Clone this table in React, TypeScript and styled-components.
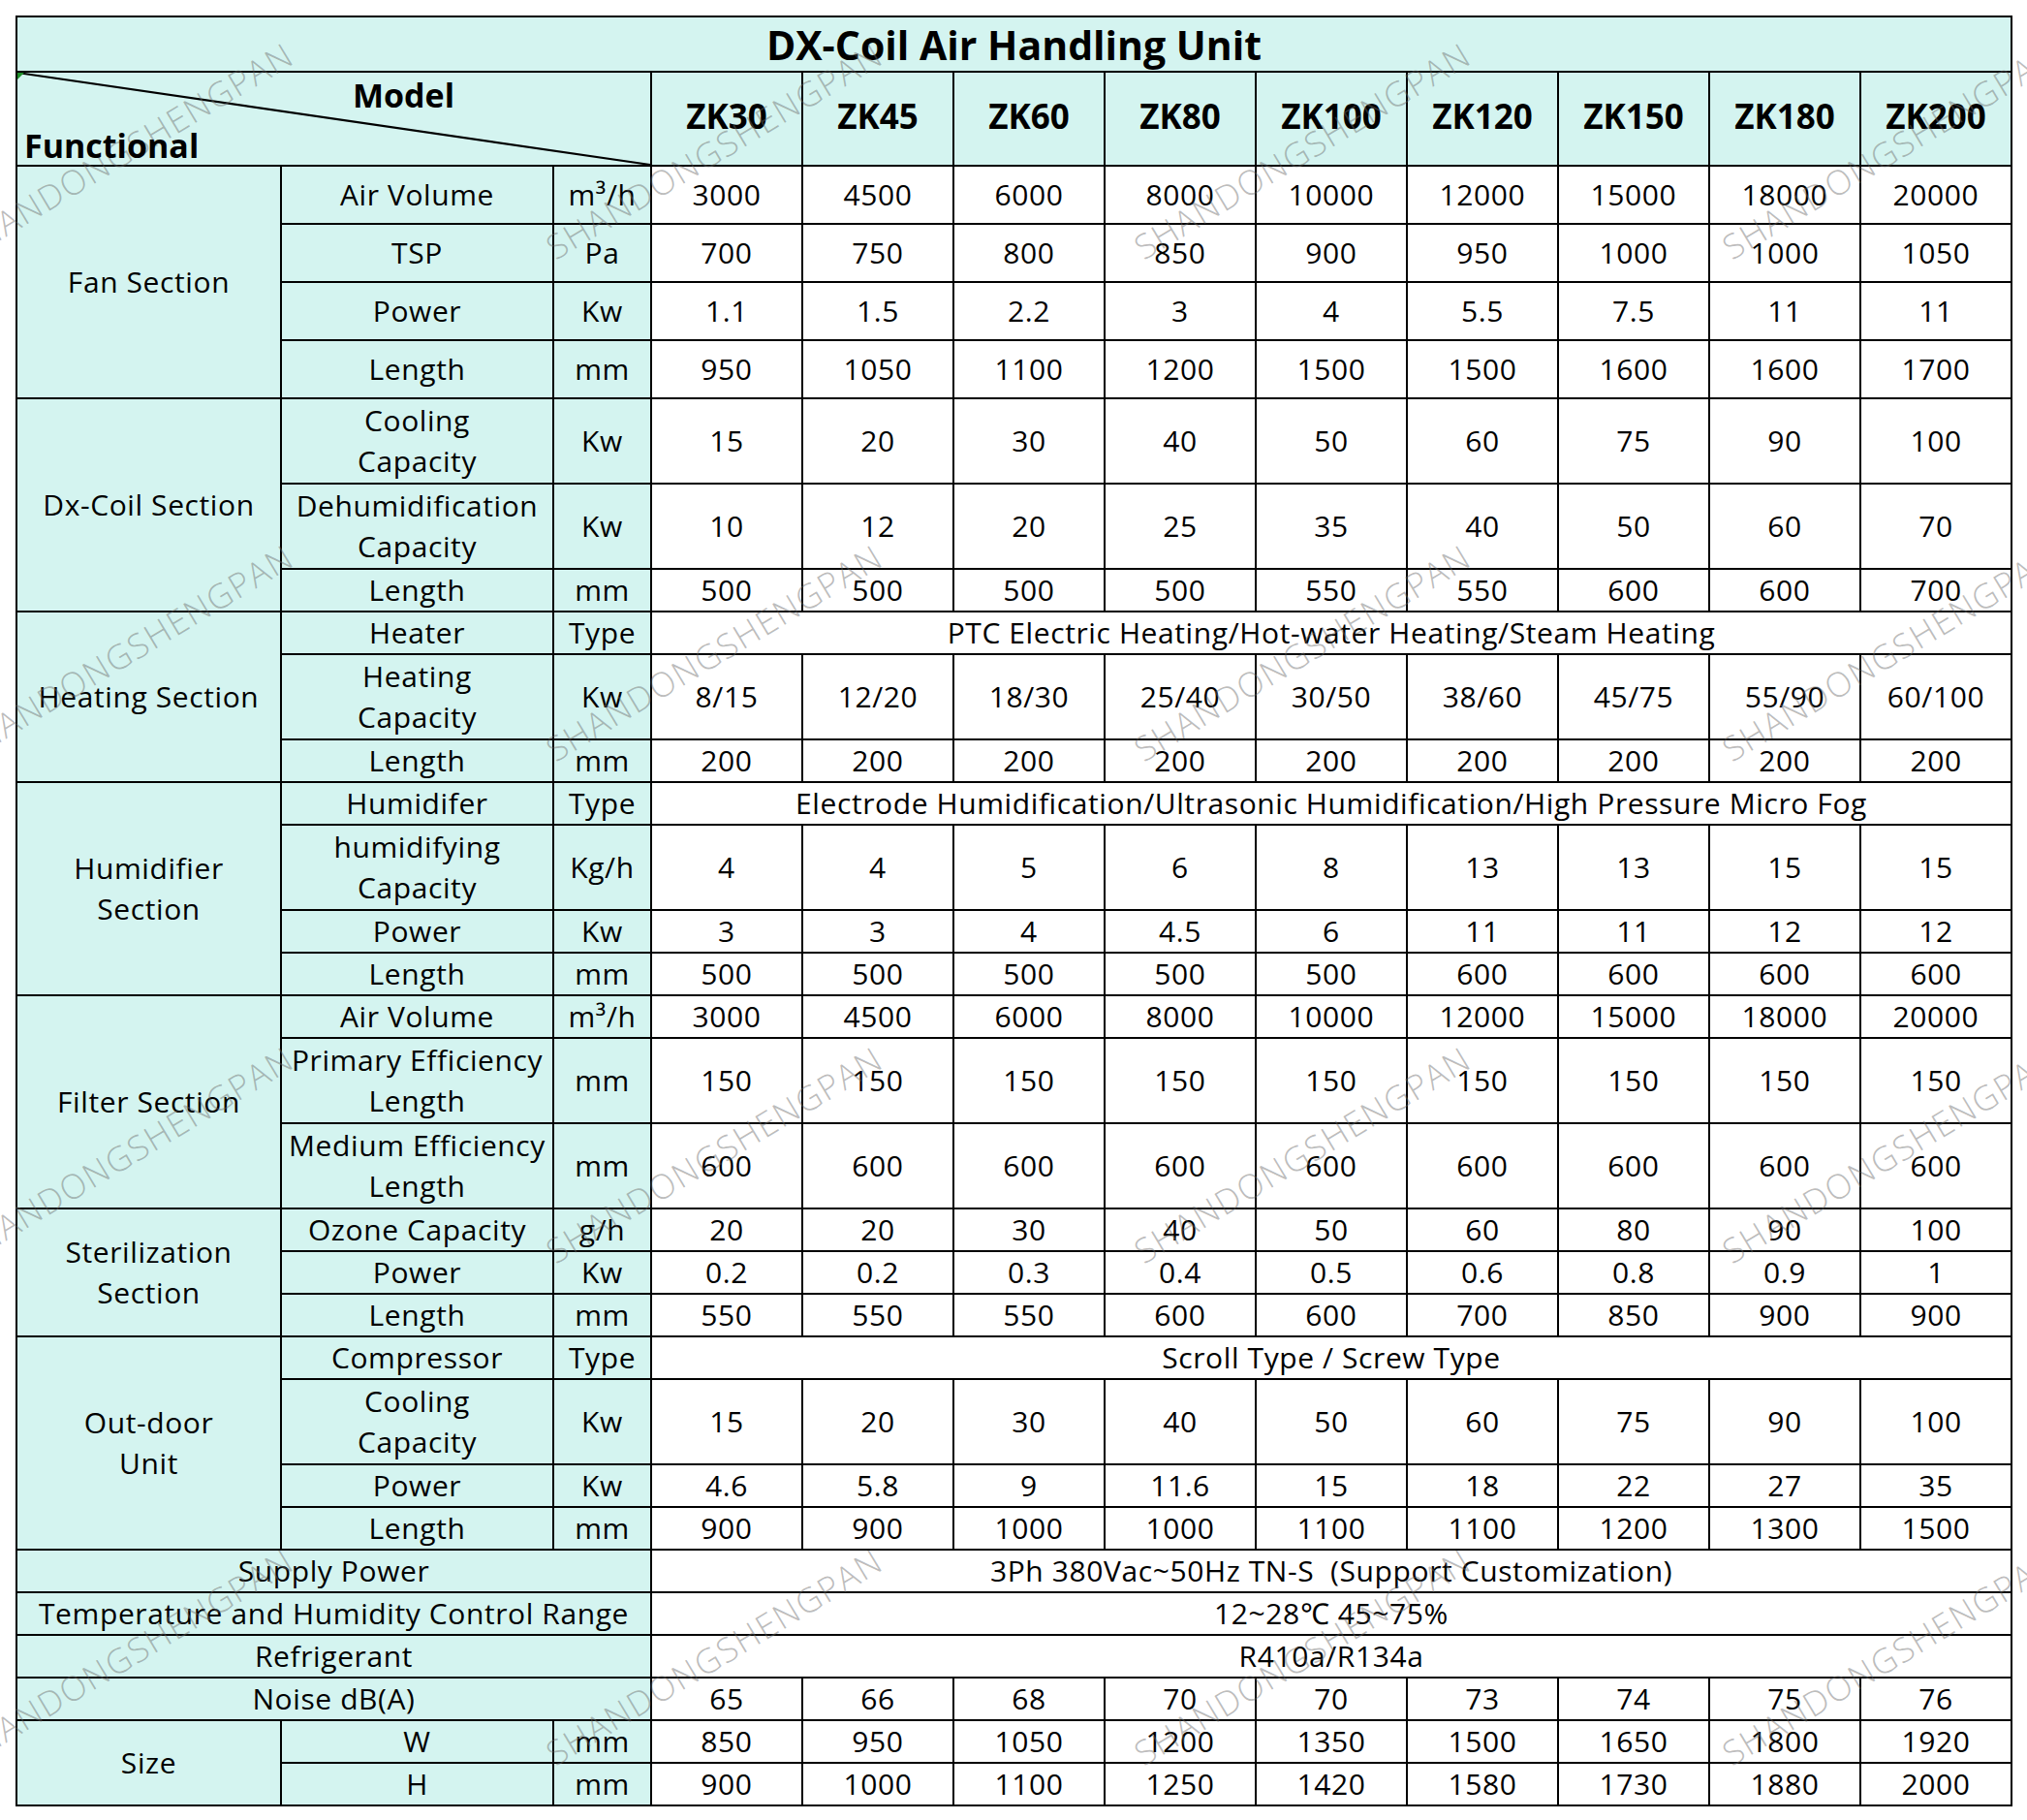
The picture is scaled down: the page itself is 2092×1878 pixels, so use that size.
import React from 'react';
import styled, { createGlobalStyle } from 'styled-components';

const Global = createGlobalStyle`
  html, body { margin: 0; padding: 0; background: #ffffff; }
  body { font-family: "Open Sans", "Noto Sans", "DejaVu Sans", sans-serif; color: #000; }
`;

const CYAN = '#d4f4f0';

const Page = styled.div`
  position: relative;
  width: 2092px;
  height: 1878px;
  overflow: hidden;
  box-sizing: border-box;
  padding: 16px 0 0 16px;
`;

const Table = styled.table`
  border-collapse: collapse;
  table-layout: fixed;
  width: 2060px;
`;

const Row = styled.tr<{ $h: number }>`
  height: ${(p) => p.$h}px;
`;

const Cell = styled.td<{ $white?: boolean }>`
  border: 2px solid #000;
  background: ${(p) => (p.$white ? '#ffffff' : CYAN)};
  text-align: center;
  vertical-align: middle;
  padding: 0;
  font-size: 30px;
  line-height: 42px;
  letter-spacing: 0.6px;
  white-space: pre;
  overflow: hidden;
`;

const Title = styled.th`
  border: 2px solid #000;
  background: ${CYAN};
  padding: 0;
  font-size: 41px;
  font-weight: 700;
  line-height: 52px;
  text-align: center;
`;

const ModelHead = styled.th`
  border: 2px solid #000;
  background: ${CYAN};
  padding: 0 0 6px;
  font-size: 35px;
  font-weight: 700;
  text-align: center;
  vertical-align: middle;
`;

const Corner = styled.th`
  position: relative;
  border: 2px solid #000;
  background: ${CYAN};
  padding: 0;
  font-weight: 700;
  font-size: 34px;
  text-align: left;
`;

const CornerInner = styled.div`
  position: relative;
  height: 95px;
  display: flex;
  flex-direction: column;
  justify-content: space-between;
`;

const ModelLabel = styled.span`
  padding: 3px 0 0 346px;
  line-height: 40px;
  position: relative;
  z-index: 1;
`;

const FunctionalLabel = styled.span`
  padding: 0 0 0 7px;
  line-height: 40px;
  position: relative;
  z-index: 1;
`;

const Diagonal = styled.svg`
  position: absolute;
  left: 0;
  top: 0;
  width: 100%;
  height: 100%;
  overflow: visible;
`;

const ErrorMark = styled.span`
  position: absolute;
  left: 0;
  top: 0;
  width: 0;
  height: 0;
  border-top: 7px solid #1f8f2a;
  border-right: 7px solid transparent;
`;

const Watermarks = styled.div`
  position: absolute;
  inset: 0;
  pointer-events: none;
  overflow: hidden;
`;

const Mark = styled.span<{ $x: number; $y: number }>`
  position: absolute;
  left: ${(p) => p.$x}px;
  top: ${(p) => p.$y - 32}px;
  font-family: "Open Sans", "Noto Sans", sans-serif;
  font-size: 35px;
  font-weight: 300;
  letter-spacing: 1.5px;
  line-height: 40px;
  white-space: nowrap;
  color: rgba(105, 105, 105, 0.45);
  transform-origin: 0 100%;
  transform: rotate(-31deg);
`;

const MODELS = ['ZK30', 'ZK45', 'ZK60', 'ZK80', 'ZK100', 'ZK120', 'ZK150', 'ZK180', 'ZK200'];

type Item = { name: string; unit: string; values?: string[]; span?: string; h: number };
type Section = { title: string; items: Item[] };

const v = (s: string) => s.split(' ');

const SECTIONS: Section[] = [
  {
    title: 'Fan Section',
    items: [
      { name: 'Air Volume', unit: 'm³/h', h: 60, values: v('3000 4500 6000 8000 10000 12000 15000 18000 20000') },
      { name: 'TSP', unit: 'Pa', h: 60, values: v('700 750 800 850 900 950 1000 1000 1050') },
      { name: 'Power', unit: 'Kw', h: 60, values: v('1.1 1.5 2.2 3 4 5.5 7.5 11 11') },
      { name: 'Length', unit: 'mm', h: 60, values: v('950 1050 1100 1200 1500 1500 1600 1600 1700') },
    ],
  },
  {
    title: 'Dx-Coil Section',
    items: [
      { name: 'Cooling\nCapacity', unit: 'Kw', h: 88, values: v('15 20 30 40 50 60 75 90 100') },
      { name: 'Dehumidification\nCapacity', unit: 'Kw', h: 88, values: v('10 12 20 25 35 40 50 60 70') },
      { name: 'Length', unit: 'mm', h: 44, values: v('500 500 500 500 550 550 600 600 700') },
    ],
  },
  {
    title: 'Heating Section',
    items: [
      { name: 'Heater', unit: 'Type', h: 44, span: 'PTC Electric Heating/Hot-water Heating/Steam Heating' },
      { name: 'Heating\nCapacity', unit: 'Kw', h: 88, values: v('8/15 12/20 18/30 25/40 30/50 38/60 45/75 55/90 60/100') },
      { name: 'Length', unit: 'mm', h: 44, values: v('200 200 200 200 200 200 200 200 200') },
    ],
  },
  {
    title: 'Humidifier\nSection',
    items: [
      {
        name: 'Humidifer',
        unit: 'Type',
        h: 44,
        span: 'Electrode Humidification/Ultrasonic Humidification/High Pressure Micro Fog',
      },
      { name: 'humidifying\nCapacity', unit: 'Kg/h', h: 88, values: v('4 4 5 6 8 13 13 15 15') },
      { name: 'Power', unit: 'Kw', h: 44, values: v('3 3 4 4.5 6 11 11 12 12') },
      { name: 'Length', unit: 'mm', h: 44, values: v('500 500 500 500 500 600 600 600 600') },
    ],
  },
  {
    title: 'Filter Section',
    items: [
      { name: 'Air Volume', unit: 'm³/h', h: 44, values: v('3000 4500 6000 8000 10000 12000 15000 18000 20000') },
      { name: 'Primary Efficiency\nLength', unit: 'mm', h: 88, values: v('150 150 150 150 150 150 150 150 150') },
      { name: 'Medium Efficiency\nLength', unit: 'mm', h: 88, values: v('600 600 600 600 600 600 600 600 600') },
    ],
  },
  {
    title: 'Sterilization\nSection',
    items: [
      { name: 'Ozone Capacity', unit: 'g/h', h: 44, values: v('20 20 30 40 50 60 80 90 100') },
      { name: 'Power', unit: 'Kw', h: 44, values: v('0.2 0.2 0.3 0.4 0.5 0.6 0.8 0.9 1') },
      { name: 'Length', unit: 'mm', h: 44, values: v('550 550 550 600 600 700 850 900 900') },
    ],
  },
  {
    title: 'Out-door\nUnit',
    items: [
      { name: 'Compressor', unit: 'Type', h: 44, span: 'Scroll Type / Screw Type' },
      { name: 'Cooling\nCapacity', unit: 'Kw', h: 88, values: v('15 20 30 40 50 60 75 90 100') },
      { name: 'Power', unit: 'Kw', h: 44, values: v('4.6 5.8 9 11.6 15 18 22 27 35') },
      { name: 'Length', unit: 'mm', h: 44, values: v('900 900 1000 1000 1100 1100 1200 1300 1500') },
    ],
  },
];

const GENERAL: { name: string; span: string }[] = [
  { name: 'Supply Power', span: '3Ph 380Vac~50Hz TN-S  (Support Customization)' },
  { name: 'Temperature and Humidity Control Range', span: '12~28℃ 45~75%' },
  { name: 'Refrigerant', span: 'R410a/R134a' },
];

const NOISE = v('65 66 68 70 70 73 74 75 76');
const SIZE_W = v('850 950 1050 1200 1350 1500 1650 1800 1920');
const SIZE_H = v('900 1000 1100 1250 1420 1580 1730 1880 2000');

const MARK_X = [-31, 577, 1184, 1791];
const MARK_Y = [267, 785, 1303, 1821];

const Values: React.FC<{ values: string[] }> = ({ values }) => (
  <>
    {values.map((val, i) => (
      <Cell $white key={i}>
        {val}
      </Cell>
    ))}
  </>
);

export default function App() {
  return (
    <Page>
      <Global />
      <Table>
        <colgroup>
          <col style={{ width: 273 }} />
          <col style={{ width: 281 }} />
          <col style={{ width: 101 }} />
          {MODELS.map((m) => (
            <col key={m} style={{ width: 156 }} />
          ))}
        </colgroup>
        <thead>
          <Row $h={57}>
            <Title colSpan={12}>DX-Coil Air Handling Unit</Title>
          </Row>
          <Row $h={97}>
            <Corner colSpan={3}>
              <CornerInner>
                <Diagonal viewBox="0 0 100 100" preserveAspectRatio="none">
                  <line x1="0" y1="0" x2="100" y2="100" stroke="#000" strokeWidth="2.2" vectorEffect="non-scaling-stroke" />
                </Diagonal>
                <ErrorMark />
                <ModelLabel>Model</ModelLabel>
                <FunctionalLabel>Functional</FunctionalLabel>
              </CornerInner>
            </Corner>
            {MODELS.map((m) => (
              <ModelHead key={m}>{m}</ModelHead>
            ))}
          </Row>
        </thead>
        <tbody>
          {SECTIONS.map((sec) =>
            sec.items.map((it, i) => (
              <Row $h={it.h} key={sec.title + i}>
                {i === 0 && <Cell rowSpan={sec.items.length}>{sec.title}</Cell>}
                <Cell>{it.name}</Cell>
                <Cell>{it.unit}</Cell>
                {it.span ? (
                  <Cell $white colSpan={9}>
                    {it.span}
                  </Cell>
                ) : (
                  <Values values={it.values || []} />
                )}
              </Row>
            ))
          )}
          {GENERAL.map((g) => (
            <Row $h={44} key={g.name}>
              <Cell colSpan={3}>{g.name}</Cell>
              <Cell $white colSpan={9}>
                {g.span}
              </Cell>
            </Row>
          ))}
          <Row $h={44}>
            <Cell colSpan={3}>Noise dB(A)</Cell>
            <Values values={NOISE} />
          </Row>
          <Row $h={44}>
            <Cell rowSpan={2}>Size</Cell>
            <Cell>W</Cell>
            <Cell>mm</Cell>
            <Values values={SIZE_W} />
          </Row>
          <Row $h={44}>
            <Cell>H</Cell>
            <Cell>mm</Cell>
            <Values values={SIZE_H} />
          </Row>
        </tbody>
      </Table>
      <Watermarks>
        {MARK_Y.map((y) =>
          MARK_X.map((x) => (
            <Mark key={`${x}-${y}`} $x={x} $y={y}>
              SHANDONGSHENGPAN
            </Mark>
          ))
        )}
      </Watermarks>
    </Page>
  );
}
